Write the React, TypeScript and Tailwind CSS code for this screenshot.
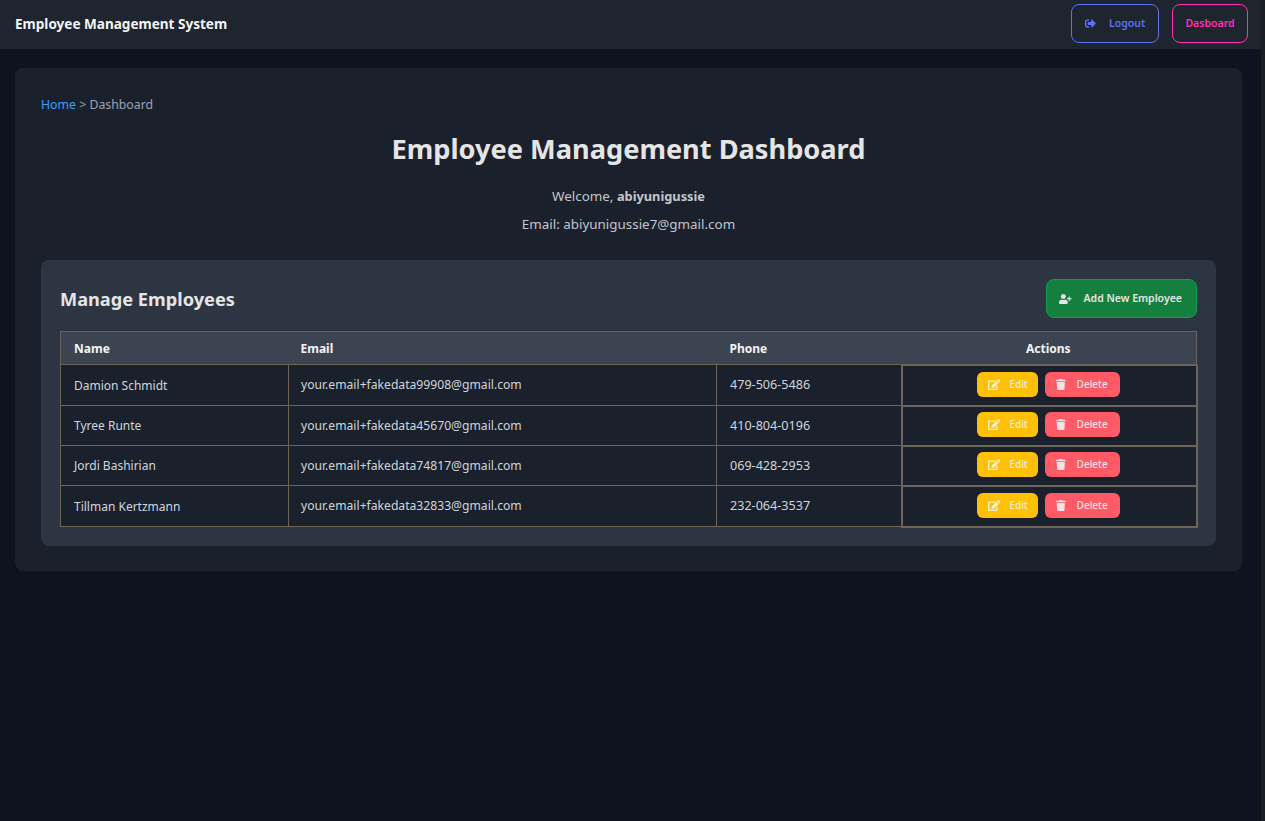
import React from 'react';
import { FaSignOutAlt, FaUserPlus, FaEdit, FaTrash } from 'react-icons/fa';

const employees = [
  { name: 'Damion Schmidt', email: 'your.email+fakedata99908@gmail.com', phone: '479-506-5486', row: 'h-[41px]' },
  { name: 'Tyree Runte', email: 'your.email+fakedata45670@gmail.com', phone: '410-804-0196', row: 'h-[40px]' },
  { name: 'Jordi Bashirian', email: 'your.email+fakedata74817@gmail.com', phone: '069-428-2953', row: 'h-[40px]' },
  { name: 'Tillman Kertzmann', email: 'your.email+fakedata32833@gmail.com', phone: '232-064-3537', row: 'h-[41px]' },
];

const App: React.FC = () => {
  return (
    <div className="flex min-h-[821px] bg-[#0e131f] font-['Noto_Sans',sans-serif] text-[#e5e5e5]">
      <div className="min-w-0 flex-1">
        <nav className="flex h-[49px] items-center justify-between bg-[#1e252e] pb-[2px] pl-[15px] pr-[13px]">
          <span className="pt-[2px] text-[13.55px] font-bold text-[#f3f4f6]">Employee Management System</span>
          <div className="flex items-center gap-[13px]">
            <button className="flex h-[39px] w-[88px] items-center rounded-lg border border-[#5f70f5] pl-[13px] text-[10.5px] font-semibold text-[#5f70f5]">
              <FaSignOutAlt className="mr-[13px] h-[11px] w-[11px]" />
              Logout
            </button>
            <button className="h-[39px] w-[76px] rounded-lg border border-[#ff2fb3] text-[10.5px] font-semibold text-[#ff2fb3]">
              Dasboard
            </button>
          </div>
        </nav>

        <main className="pl-[15px] pr-[19px] pt-[19px]">
          <section className="h-[503px] rounded-lg bg-[#1a212d] px-[26px] pt-[28px]">
            <div className="text-[12.3px] leading-[17px] text-[#9ca3af]">
              <a className="text-[#3b9eff]">Home</a> &gt; Dashboard
            </div>
            <h1 className="mt-[17px] text-center text-[27.2px] font-bold leading-[38px] text-[#e5e5e5]">
              Employee Management Dashboard
            </h1>
            <p className="mt-[19px] text-center text-[13.4px] leading-[18px] text-[#c4c6ca]">
              Welcome, <strong className="text-[12.8px]">abiyunigussie</strong>
            </p>
            <p className="mt-[10px] text-center text-[13.4px] leading-[18px] text-[#c4c6ca]">
              Email: abiyunigussie7@gmail.com
            </p>

            <div className="mt-[27px] h-[286px] rounded-lg bg-[#2d3442] px-[19px] pt-[19px]">
              <div className="mb-[13px] flex h-[39px] items-center justify-between">
                <h2 className="pt-[3px] text-[18.2px] font-bold text-[#e5e5e5]">Manage Employees</h2>
                <button className="flex h-[39px] w-[151px] items-center rounded-lg border border-[#0f9d58] bg-[#15803d] pl-[12px] text-[10.5px] font-semibold text-[#e5e5e5]">
                  <FaUserPlus className="mr-[12px] h-[10px] w-[12.5px]" />
                  Add New Employee
                </button>
              </div>

              <table className="w-[1136px] table-fixed border-collapse text-[12px] text-[#d1d5db]">
                <colgroup>
                  <col className="w-[228px]" />
                  <col className="w-[428px]" />
                  <col className="w-[185px]" />
                  <col className="w-[295px]" />
                </colgroup>
                <thead>
                  <tr className="h-[33px] bg-[#3d4451] text-[#f3f4f6]">
                    <th className="border-y border-l border-[#6b6557] px-[13px] pt-[1px] text-left font-bold">Name</th>
                    <th className="border-y border-[#6b6557] pl-[12px] pr-[13px] pt-[1px] text-left font-bold">Email</th>
                    <th className="border-y border-[#6b6557] px-[13px] pt-[1px] text-left font-bold">Phone</th>
                    <th className="border-y border-r border-[#6b6557] pl-[13px] pr-[14px] pt-[2px] text-center font-bold">Actions</th>
                  </tr>
                </thead>
                <tbody>
                  {employees.map((e) => (
                    <tr key={e.email} className={`${e.row} bg-[#1a212d]`}>
                      <td className="border border-[#6b6557] px-[13px] pt-[1px]">{e.name}</td>
                      <td className="border border-[#6b6557] pl-[12px] pr-[13px] pt-[1px] text-[12.15px]">{e.email}</td>
                      <td className="border border-[#6b6557] px-[13px] pt-[1px] text-[12.6px]">{e.phone}</td>
                      <td className="border-2 border-[#6b6557] pb-[2px] pl-[13px] pr-[14px]">
                        <div className="flex items-center justify-center gap-[7px]">
                          <button className="flex h-[25px] w-[61px] items-center rounded-md bg-[#ffc107] pl-[11px] text-[10px] font-medium text-[#f7eecb]">
                            <FaEdit className="mr-[9px] h-[11px] w-[12.4px]" />
                            Edit
                          </button>
                          <button className="flex h-[25px] w-[75px] items-center rounded-md bg-[#ff5a65] pl-[11px] text-[10px] font-medium text-[#fbe3e3]">
                            <FaTrash className="mr-[11px] h-[11px] w-[9.6px]" />
                            Delete
                          </button>
                        </div>
                      </td>
                    </tr>
                  ))}
                </tbody>
              </table>
            </div>
          </section>
        </main>
      </div>
      <div className="w-[4px] bg-[#1b1d20]" />
    </div>
  );
};

export default App;
